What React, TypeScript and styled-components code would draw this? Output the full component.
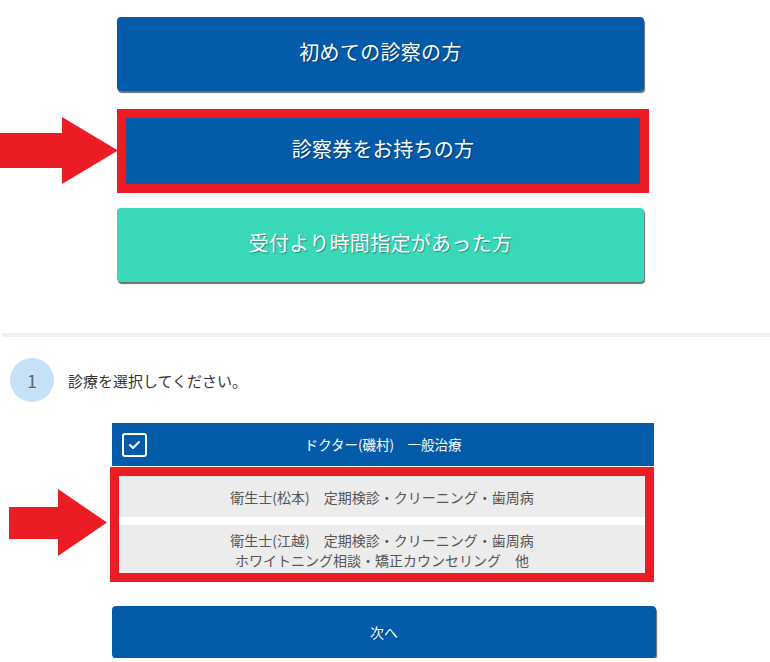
import React from "react";
import styled, { createGlobalStyle } from "styled-components";

const Global = createGlobalStyle`
  html, body { margin: 0; padding: 0; background: #fff; }
  body { font-family: "Noto Sans CJK JP", "Noto Sans", sans-serif; }
  * { box-sizing: border-box; }
`;

const BLUE = "#035ba9";
const TEAL = "#38d8b9";
const RED = "#ec1c24";

const Page = styled.div`
  width: 770px;
  display: flex;
  flex-direction: column;
  padding-top: 17px;
`;

const ChoiceRow = styled.div<{ $mt?: number }>`
  position: relative;
  display: flex;
  padding-left: 117px;
  margin-top: ${(p) => p.$mt ?? 0}px;
`;

const ChoiceButton = styled.div<{ $teal?: boolean }>`
  width: 527px;
  height: 74px;
  border-radius: 4px;
  background: ${(p) => (p.$teal ? TEAL : BLUE)};
  box-shadow: 1px 2px 1px rgba(60, 60, 60, 0.75);
  display: flex;
  align-items: center;
  justify-content: center;
  color: #fff;
  font-size: 20px;
  letter-spacing: 0.3px;
  text-shadow: 1px 1px 1px rgba(0, 0, 0, 0.35);
  padding-bottom: 5px;
`;

const FramedChoice = styled.div`
  width: 532px;
  height: 84px;
  border: 9px solid ${RED};
  background: ${BLUE};
  display: flex;
  align-items: center;
  justify-content: center;
  color: #fff;
  font-size: 20px;
  letter-spacing: 0.3px;
  text-shadow: 1px 1px 1px rgba(0, 0, 0, 0.35);
  padding-bottom: 5px;
`;

const Arrow = styled.svg<{ $left: number; $top: number }>`
  position: absolute;
  left: ${(p) => p.$left}px;
  top: ${(p) => p.$top}px;
`;

const Divider = styled.div`
  margin: 51px 0 0 2px;
  height: 4px;
  background: #efefef;
`;

const StepRow = styled.div`
  display: flex;
  align-items: center;
  margin: 21px 0 0 10px;
`;

const StepBadge = styled.div`
  width: 44px;
  height: 44px;
  border-radius: 50%;
  background: #c6e0f7;
  color: #666;
  font-size: 18px;
  display: flex;
  align-items: center;
  justify-content: center;
`;

const StepText = styled.div`
  margin-left: 14px;
  font-size: 15px;
  color: #333;
`;

const Panel = styled.div`
  position: relative;
  margin: 21px 0 0 110px;
  width: 544px;
  display: flex;
  flex-direction: column;
`;

const PanelHeader = styled.div`
  margin-left: 2px;
  height: 43px;
  background: ${BLUE};
  display: flex;
  align-items: center;
  position: relative;
  color: #fff;
  font-size: 13.5px;
`;

const CheckBox = styled.div`
  position: absolute;
  left: 10px;
  top: 10px;
  width: 25px;
  height: 24px;
  border: 2px solid #fff;
  border-radius: 3px;
  display: flex;
  align-items: center;
  justify-content: center;
`;

const HeaderLabel = styled.div`
  flex: 1;
  text-align: center;
  padding-bottom: 2px;
`;

const OptionFrame = styled.div`
  margin-top: 1px;
  border: 9px solid ${RED};
  display: flex;
  flex-direction: column;
  gap: 8px;
  background: #fff;
`;

const OptionRow = styled.div<{ $h: number; $pt?: number }>`
  height: ${(p) => p.$h}px;
  padding-top: ${(p) => p.$pt ?? 0}px;
  background: #ececec;
  display: flex;
  flex-direction: column;
  align-items: center;
  justify-content: center;
  color: #555;
  font-size: 14px;
  line-height: 20px;
  text-align: center;
`;

const NextButton = styled.div`
  margin: 24px 0 0 112px;
  width: 544px;
  height: 52px;
  border-radius: 4px;
  background: ${BLUE};
  box-shadow: 1px 2px 1px rgba(60, 60, 60, 0.75);
  display: flex;
  align-items: center;
  justify-content: center;
  color: #fff;
  font-size: 14px;
  text-shadow: 1px 1px 1px rgba(0, 0, 0, 0.3);
`;

export default function App() {
  return (
    <Page>
      <Global />
      <ChoiceRow>
        <ChoiceButton>初めての診察の方</ChoiceButton>
      </ChoiceRow>
      <ChoiceRow $mt={18}>
        <FramedChoice>診察券をお持ちの方</FramedChoice>
        <Arrow $left={0} $top={8} width={118} height={67} viewBox="0 0 118 67">
          <polygon points="0,16 62,16 62,0 118,33.5 62,67 62,51 0,51" fill={RED} />
        </Arrow>
      </ChoiceRow>
      <ChoiceRow $mt={15}>
        <ChoiceButton $teal>受付より時間指定があった方</ChoiceButton>
      </ChoiceRow>
      <Divider />
      <StepRow>
        <StepBadge>1</StepBadge>
        <StepText>診療を選択してください。</StepText>
      </StepRow>
      <Panel>
        <PanelHeader>
          <CheckBox>
            <svg width="13" height="10" viewBox="0 0 13 10">
              <polyline points="2,5 5,8 11,2" fill="none" stroke="#fff" strokeWidth="2" strokeLinecap="round" strokeLinejoin="round" />
            </svg>
          </CheckBox>
          <HeaderLabel>ドクター(磯村)　一般治療</HeaderLabel>
        </PanelHeader>
        <OptionFrame>
          <OptionRow $h={41}>衛生士(松本)　定期検診・クリーニング・歯周病</OptionRow>
          <OptionRow $h={48} $pt={2}>
            <span>衛生士(江越)　定期検診・クリーニング・歯周病</span>
            <span>ホワイトニング相談・矯正カウンセリング　他</span>
          </OptionRow>
        </OptionFrame>
        <Arrow $left={-101} $top={66} width={98} height={67} viewBox="0 0 98 67">
          <polygon points="0,18 49,18 49,0 98,33.5 49,67 49,50 0,50" fill={RED} />
        </Arrow>
      </Panel>
      <NextButton>次へ</NextButton>
    </Page>
  );
}
